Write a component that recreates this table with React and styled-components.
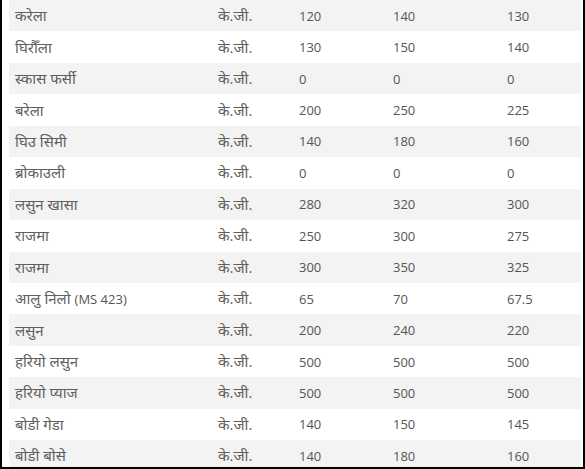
import styled, { createGlobalStyle } from 'styled-components';

const GlobalStyle = createGlobalStyle`
  html, body {
    margin: 0;
    padding: 0;
    background: #fff;
  }
`;

const Frame = styled.div`
  box-sizing: border-box;
  width: 585px;
  height: 469px;
  overflow: hidden;
  border: 2px solid #000;
  border-top: none;
  padding: 0 2px 0 7px;
  background: #fff;
`;

const Table = styled.div`
  display: flex;
  flex-direction: column;
`;

const Row = styled.div`
  display: grid;
  grid-template-columns: 203px 81px 94px 114px 1fr;
  align-items: center;
  height: 31.45px;
  flex-shrink: 0;
  background: ${(p) => (p.$striped ? '#f3f3f3' : '#fff')};
`;

const Cell = styled.div`
  padding: 0 6px;
  font-family: 'Open Sans', 'Noto Sans', sans-serif;
  font-size: 13px;
  line-height: 18px;
  color: #555;
  white-space: nowrap;
`;

const Deva = styled.span`
  font-size: 15px;
  color: #606060;
`;

// split text into devanagari and latin runs so the hindi script can be set larger
const renderText = (text) =>
  text.split(/([\u0900-\u097F][\u0900-\u097F\s.]*)/).map((part, k) =>
    /[\u0900-\u097F]/.test(part) ? <Deva key={k}>{part}</Deva> : part
  );

const rows = [
  ['करेला', 'के.जी.', '120', '140', '130'],
  ['घिरौँला', 'के.जी.', '130', '150', '140'],
  ['स्कास फर्सी', 'के.जी.', '0', '0', '0'],
  ['बरेला', 'के.जी.', '200', '250', '225'],
  ['घिउ सिमी', 'के.जी.', '140', '180', '160'],
  ['ब्रोकाउली', 'के.जी.', '0', '0', '0'],
  ['लसुन खासा', 'के.जी.', '280', '320', '300'],
  ['राजमा', 'के.जी.', '250', '300', '275'],
  ['राजमा', 'के.जी.', '300', '350', '325'],
  ['आलु निलो (MS 423)', 'के.जी.', '65', '70', '67.5'],
  ['लसुन', 'के.जी.', '200', '240', '220'],
  ['हरियो लसुन', 'के.जी.', '500', '500', '500'],
  ['हरियो प्याज', 'के.जी.', '500', '500', '500'],
  ['बोडी गेडा', 'के.जी.', '140', '150', '145'],
  ['बोडी बोसे', 'के.जी.', '140', '180', '160'],
];

export default function App() {
  return (
    <>
      <GlobalStyle />
      <Frame>
        <Table>
          {rows.map((r, i) => (
            <Row key={i} $striped={i % 2 === 0}>
              {r.map((c, j) => (
                <Cell key={j}>{renderText(c)}</Cell>
              ))}
            </Row>
          ))}
        </Table>
      </Frame>
    </>
  );
}
